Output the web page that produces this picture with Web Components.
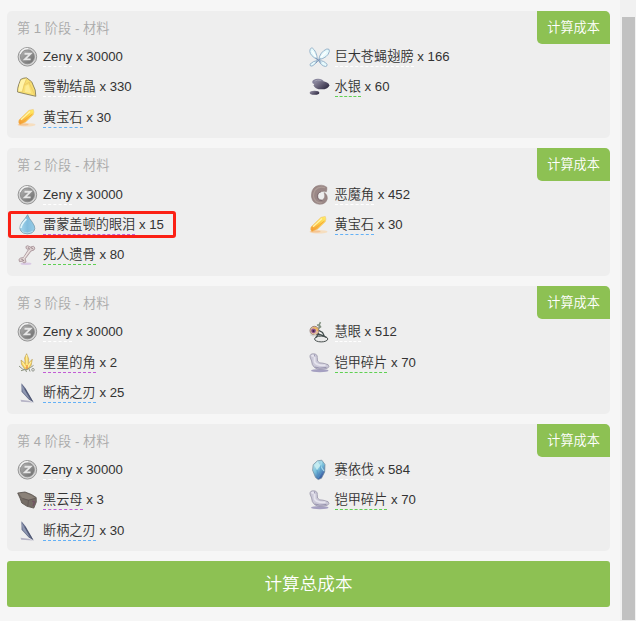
<!DOCTYPE html>
<html lang="zh-CN">
<head>
<meta charset="utf-8">
<title>材料</title>
<style>
  html, body{
    height: 100%;
    margin: 0;
    overflow: hidden;
  }
  body{
    display: flex;
    background: #f6f6f6;
    color: #333;
    font: 350 13.2px/20px "Liberation Sans", "Noto Sans CJK SC", sans-serif;
  }
  main{
    display: flex;
    flex-direction: column;
    gap: 10px;
    width: 603px;
    padding: 10.7px 10px 0 7px;
  }
</style>
</head>
<body>
<main></main>
<scroll-rail></scroll-rail>

<script>
const icons = {
  zeny: `
    <defs><linearGradient id="g" x2="1" y2="1"><stop stop-color="#b4b4b4"/><stop offset="1" stop-color="#6a6a6a"/></linearGradient></defs>
    <circle cx="10.4" cy="10.8" r="9.3" fill="#d2d2d2" stroke="#8f8f8f" stroke-width=".9"/>
    <circle cx="10.4" cy="10.8" r="7" fill="url(#g)" stroke="#858585" stroke-width=".8"/>
    <path d="M3.2 8a8 8 0 0 1 8-5.4" fill="none" stroke="#f4f4f4" stroke-width="1.2"/>
    <path d="M7.5 7.8h6l-5.6 5.6h5.7" fill="none" stroke="#e6e6e6" stroke-width="1.9"/>`,
  crystal: `
    <path d="M3.7 3.4Q7 1.6 9.7 1.9L14.7 5.8 18.2 14 18.8 20.3 8 17.8.6 16Q.4 12 1.6 9z" fill="#f8df72" stroke="#777052" stroke-width=".8"/>
    <path d="M4 3.9 9.5 2.5 7 9 5 15 1.2 15.4 2.2 9z" fill="#fff3a8"/>
    <path d="M9.7 2.5 7 9 5.5 15.8M7 9l5-2.5 2.5-.7M12 6.5 17.8 19" fill="none" stroke="#e9c765" stroke-width=".8"/>
    <path d="M8.5 10 11.5 8.5 14 17 8 16z" fill="#fdeb94"/>`,
  topaz: `
    <defs><linearGradient id="g" x1="1" x2="0" y2="1"><stop stop-color="#fff06a"/><stop offset=".5" stop-color="#fcc744"/><stop offset="1" stop-color="#f39230"/></linearGradient></defs>
    <ellipse cx="9.5" cy="17.7" rx="9" ry="1.7" fill="#fbd3a0" opacity=".6"/>
    <ellipse cx="6.5" cy="17.6" rx="5" ry="1" fill="#f6aa64" opacity=".5"/>
    <path d="M12 3.3 16.3 2.4Q17.6 5 16.3 7.8L8.3 15.3 3 17.5Q1 16 2 13z" fill="url(#g)" stroke="#eec06a" stroke-width=".5"/>
    <path d="M13 4.5 4 12.8" stroke="#fff4a8" stroke-width="1.5"/>
    <path d="M15.5 7 5 15.5" stroke="#f5a63a" stroke-width="1"/>`,
  wings: `
    <g fill="#e5f9fc" stroke="#8dabc5" stroke-width=".9">
      <path d="M8.4 13.6Q1 9.6.8 5.4 1 1.6 3.3 2 7.6 5 8.4 13.6z"/>
      <path d="M9.7 13.8Q11 5.8 17.8 3q3-.6 2.6 2.3Q19 11.6 9.7 13.8z"/>
      <path d="M8.4 14.5Q4 15 1 18.2q-.2 2.4 2 1.9Q6 19 8.4 14.5z"/>
      <path d="M9.7 14.7q5.5-.3 8.3 3.6.4 2.2-1.4 2.2Q12 19.8 9.7 14.7z"/>
    </g>
    <path d="M6.5 11.8 12.4 16.8M11.3 12.2 6.8 17.2" stroke="#7790b5" stroke-width=".9"/>
    <path d="M3 5 7 11M17 6 12 11" stroke="#fff" stroke-width="1.2"/>`,
  mercury: `
    <defs><linearGradient id="g" x2="1" y2=".6"><stop stop-color="#9995a8"/><stop offset=".6" stop-color="#5d586f"/><stop offset="1" stop-color="#343047"/></linearGradient></defs>
    <ellipse cx="9" cy="5.9" rx="5.8" ry="3.1" fill="#85829a"/>
    <ellipse cx="12.5" cy="9.3" rx="7.8" ry="4" fill="url(#g)"/>
    <path d="M5.5 5.2Q8 3.6 12 4.2" fill="none" stroke="#a5a3b2" stroke-width="1"/>
    <ellipse cx="5.5" cy="16.8" rx="4.8" ry="2" fill="url(#g)"/>`,
  tear: `
    <defs><linearGradient id="g" x2="1"><stop stop-color="#a7d8ed"/><stop offset=".5" stop-color="#82bddd"/><stop offset="1" stop-color="#96cce7"/></linearGradient></defs>
    <path d="M10.6.7Q11.8 4 15.5 8.6q5 7-.8 10.3-4.4 2-8.7 0Q.4 15.4 4.8 8.6 8.7 4 10.6.7z" fill="url(#g)" stroke="#779cad" stroke-width=".8"/>
    <path d="M9.4 5Q4 10.5 4 14" fill="none" stroke="#e0f5fb" stroke-width="1.7"/>
    <path d="M5 17.5q5 3 11-.5" fill="none" stroke="#b8e0ee" stroke-width="1"/>`,
  bone: `
    <ellipse cx="9" cy="19.7" rx="5.5" ry="1.2" fill="#d9c9e3"/>
    <path d="M11.4 5.7 9.2 4.5Q8 2 10.5 1.7L13.5 3 16.5 2.2Q19 4 17 6L14 7 8.2 14.8 9 18Q6.5 20.4 5.2 17.3L2.5 17.7Q.8 15 3.6 14L6.5 13.5z" fill="#ddd0d0" stroke="#a38e94" stroke-width=".8"/>
    <path d="M12.5 6.3 6.7 14.5" stroke="#f3e9e6" stroke-width="1"/>
    <path d="M14 3.3 15.8 5.2M11 3.6 12.8 5.2M4.5 15.4 6.8 16.6" stroke="#8b747c" stroke-width="1"/>`,
  horn: `
    <path d="M17.8 3.2Q13-.4 7 2.3 1.8 5.5 2.5 13q1 6.7 7.8 7.3 6.6.2 8-5.4.6-4.2-3.2-6.4 1.8 5.3-1.4 7.2-3.3 1-4.6-2-1.2-4.4 2.8-6 4-1 5.3.3 1-2 .6-4.8z" fill="#9a8786" stroke="#8c7a79" stroke-width=".5"/>
    <path d="M16 3.8Q10 1.8 6.2 6q-3.7 6.5.6 11 3 2.5 6.5 1.5" fill="none" stroke="#ad9c97" stroke-width="1.2"/>
    <path d="M12 7.8Q7.5 9 8.6 14q1.5 3.3 4.7 2.6" fill="none" stroke="#76636a" stroke-width=".7"/>`,
  star: `
    <path d="M9.6 1.7 11.8 7 11.2 11.5 15.3 7.2 14.2 13.2 11 17.5 8 17.3 4.5 12.5 4 8 8.2 11.5 7.6 6z" fill="#f6cf59" stroke="#b69b58" stroke-width=".6"/>
    <path d="M9.6 3 10 15M5.4 10 8.5 15M14 9.8 10.8 15" stroke="#fff0a0" stroke-width="1.2"/>
    <path d="M2 14 5.5 17 8.7 18 13.5 15.5 16.5 13.4M4 18.7 7.5 17.7M8.5 17.3 9.5 20M12 17 13 19.5" fill="none" stroke="#8f9683" stroke-width="1"/>
    <circle cx="16" cy="17.8" r="1.3" fill="none" stroke="#969a92"/>
    <path d="M10 13v4" stroke="#e98a45" stroke-width="1.3"/>`,
  blade: `
    <path d="M3.5 17.8 11.8 18.8 16.3 20.5 4.2 19.8z" fill="#b6b4c6"/>
    <path d="M4.5 1.3 8.7 6.5 16.7 20.5 11.8 17.5 4.6 9.8z" fill="#606987"/>
    <path d="M4.5 2 5.6 9.8 13 17.8z" fill="#8f98b2"/>
    <path d="M8 7 15.3 19" stroke="#4a516b" stroke-width=".8"/>`,
  eye: `
    <ellipse cx="12.2" cy="18" rx="6.6" ry="2.9" fill="#e9e9e9" stroke="#49504f" stroke-width="1"/>
    <path d="M9 9 13.5 11.5 15.5 15.5M7 13 12 13.8 17.5 16.5M10 12 6.8 16.7" fill="none" stroke="#414c4b" stroke-width="1.3"/>
    <path d="M8 4.3 10.2 3.8 11.5 1.2M10.2 3.8 12 6.5M10.5 4 9.8 8" fill="none" stroke="#829080" stroke-width="1.5"/>
    <circle cx="5.4" cy="9.7" r="4.4" fill="#e3bd9a" stroke="#8a7069" stroke-width=".8"/>
    <circle cx="4.5" cy="9.8" r="2.4" fill="#8f518d"/>
    <circle cx="4.5" cy="10" r="1.1" fill="#392141"/>
    <path d="M4.5 6.7 8 7.5 8.5 10" fill="none" stroke="#efb04a" stroke-width="1.2"/>
    <path d="M1 13.7 4.3 15 7 13.6" fill="none" stroke="#d2d7d2" stroke-width="1.2"/>`,
  armor: `
    <ellipse cx="10.8" cy="18.7" rx="8.8" ry="1.6" fill="#a5a0c1"/>
    <path d="M1 5Q.7 1.7 4.6 1.8 8.5 2 8.3 5.5L8.5 9Q10.2 11.6 14 11.2L19 12.6Q21 15 18.5 16.2 10 18.6 5.7 15.7 2.6 13 2.6 9z" fill="#cbc9d8" stroke="#9894a8" stroke-width=".8"/>
    <path d="M2.5 4.2Q5 2.5 5.5 5L5.6 10Q8 14 16.5 13.2" fill="none" stroke="#e6e4ee" stroke-width="1.8"/>
    <path d="M5.8 15Q10 17 17.5 15.4M5.2 2.5 5.8 4.6" fill="none" stroke="#8b86a5" stroke-width=".8"/>`,
  gem: `
    <defs><linearGradient id="g" x2=".6" y2="1"><stop stop-color="#d8f3f5"/><stop offset=".55" stop-color="#78bfdb"/><stop offset="1" stop-color="#324f9d"/></linearGradient></defs>
    <path d="M8.4 1.8 12.8 1.2 16 5.5 15.7 13 12.5 19.2 9.2 20.6 6.5 18.4 3.6 11.2 4.2 5.7z" fill="url(#g)" stroke="#708b9b" stroke-width=".7"/>
    <path d="M8.5 2.5 5.2 6.6 8 11 11.5 6.5z" fill="#c4ebf0"/>
    <path d="M12.5 2.5 11.5 7 15 12" fill="none" stroke="#a5dcec" stroke-width="1.2"/>
    <path d="M8 11 9.3 19.2M11.5 6.5 12 13.5 9.4 19" fill="none" stroke="#4f98c6" stroke-width=".7"/>`,
  rock: `
    <path d="M.7 4 8 3 14.5 5.5 19.2 8.5 19.3 13 16.8 19.1 10 17.3 4.8 14 3.1 9.3z" fill="#756d66" stroke="#57504b" stroke-width=".8"/>
    <path d="M1.7 4.6 8 3.7 14 6.2 18.4 9 11.5 10.8 5.5 9z" fill="#8b8279"/>
    <path d="M5.5 9.5 11.5 11.2 18.5 9.4M11.5 11.2 10.8 17" fill="none" stroke="#5f5653" stroke-width=".8"/>
    <path d="M15 12 17.5 12.8 16 17" fill="none" stroke="#725263" stroke-width="1.3"/>`,
};

// [name, amount, icon, underline colour]
const white = '#fff';
const green = '#5ed052';
const blue = '#64b1f6';
const purple = '#c35dd5';
const stages = [
  [
    ['Zeny', 30000, 'zeny', white],
    ['巨大苍蝇翅膀', 166, 'wings', white],
    ['雪勒结晶', 330, 'crystal', white],
    ['水银', 60, 'mercury', green],
    ['黄宝石', 30, 'topaz', blue],
  ],
  [
    ['Zeny', 30000, 'zeny', white],
    ['恶魔角', 452, 'horn', white],
    ['雷蒙盖顿的眼泪', 15, 'tear', purple, true],
    ['黄宝石', 30, 'topaz', blue],
    ['死人遗骨', 80, 'bone', green],
  ],
  [
    ['Zeny', 30000, 'zeny', white],
    ['慧眼', 512, 'eye', white],
    ['星星的角', 2, 'star', purple],
    ['铠甲碎片', 70, 'armor', green],
    ['断柄之刃', 25, 'blade', blue],
  ],
  [
    ['Zeny', 30000, 'zeny', white],
    ['赛依伐', 584, 'gem', white],
    ['黑云母', 3, 'rock', purple],
    ['铠甲碎片', 70, 'armor', green],
    ['断柄之刃', 30, 'blade', blue],
  ],
];

class MaterialItem extends HTMLElement {
  connectedCallback() {
    this.attachShadow({ mode: 'open' }).innerHTML = `
    <style>
    :host{
      display: flex;
      position: relative;
      height: 30.3px;
      line-height: 22px;
      white-space: pre;
    }
    :host([marked])::before{
      content: "";
      position: absolute;
      left: -9px;
      top: -3px;
      width: 162px;
      height: 21px;
      border: 3px solid #fb2014;
      border-radius: 3px;
    }
    svg{
      width: 22px;
      height: 22px;
      margin-right: 4px;
    }
    .name{
      height: 20px;
      border-bottom: 1px dashed ${this.getAttribute('line')};
    }
    </style>
    <svg viewBox="0 0 22 22" aria-hidden="true">${icons[this.getAttribute('icon')]}</svg>
    <span class="name"><slot></slot></span><span> x ${this.getAttribute('amount')}</span>`;
  }
}

class StageCard extends HTMLElement {
  connectedCallback() {
    this.attachShadow({ mode: 'open' }).innerHTML = `
    <style>
    :host{
      display: block;
      height: 127.67px;
      border-radius: 5px;
      background: #eee;
    }
    header{
      display: flex;
      justify-content: space-between;
      height: 35.4px;
      padding-left: 10px;
      color: #aaa;
    }
    h3{
      margin: 8px 0 0;
      font: inherit;
    }
    .items{
      display: grid;
      grid-template-columns: 1fr 1fr;
      padding: 0 10px;
    }
    </style>
    <header>
      <h3>第 ${this.getAttribute('stage')} 阶段 - 材料</h3>
      <cost-button>计算成本</cost-button>
    </header>
    <div class="items"><slot></slot></div>`;
  }
}

class CostButton extends HTMLElement {
  connectedCallback() {
    this.attachShadow({ mode: 'open' }).innerHTML = `
    <style>
    :host{
      display: block;
    }
    button{
      display: block;
      width: 100%;
      height: 33px;
      padding: 1px 10px 0;
      border: 0;
      border-radius: 0 5px;
      background: #8dc153;
      color: #fff;
      font: inherit;
    }
    :host([total]) button{
      height: 46px;
      padding-top: 0;
      border-radius: 3px;
      font-size: 17.6px;
    }
    </style>
    <button type="button"><slot></slot></button>`;
  }
}

class ScrollRail extends HTMLElement {
  connectedCallback() {
    this.attachShadow({ mode: 'open' }).innerHTML = `
    <style>
    :host{
      display: block;
      box-sizing: border-box;
      width: 16px;
      height: 100%;
      padding: 17px 1px 1px 2px;
      background: #f1f1f1;
    }
    div{
      height: 100%;
      background: #c1c1c1;
    }
    </style>
    <div></div>`;
  }
}

window.customElements.define('material-item', MaterialItem);
window.customElements.define('stage-card', StageCard);
window.customElements.define('cost-button', CostButton);
window.customElements.define('scroll-rail', ScrollRail);

document.querySelector('main').innerHTML = stages.map((items, i) => `
  <stage-card stage="${i + 1}">
    ${items.map(([name, amount, icon, line, marked]) => `<material-item icon="${icon}" amount="${amount}" line="${line}"${marked ? ' marked' : ''}>${name}</material-item>`).join('')}
  </stage-card>`).join('') + '<cost-button total>计算总成本</cost-button>';
</script>
</body>
</html>
